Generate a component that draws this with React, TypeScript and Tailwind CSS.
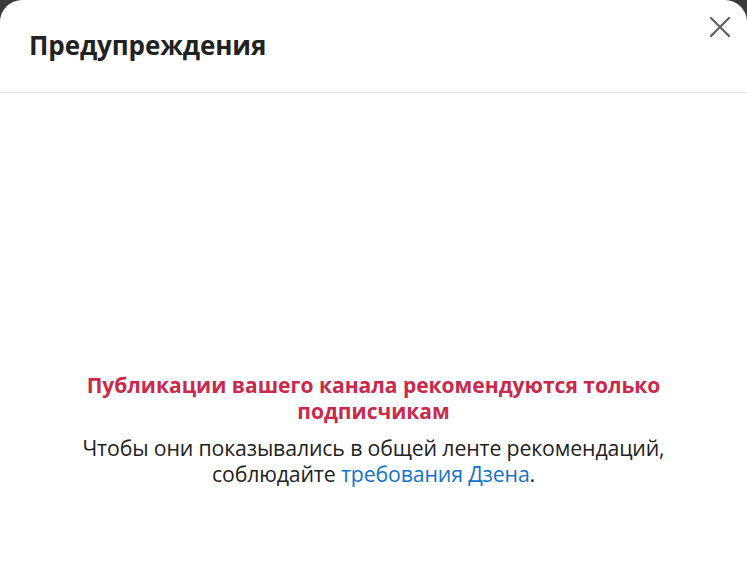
import React from 'react';

const CloseIcon: React.FC = () => (
    <svg width="22" height="22" viewBox="0 0 22 22" fill="none">
        <path d="M2 2L20 20M20 2L2 20" stroke="#5f5f5f" strokeWidth="2.2" strokeLinecap="round" />
    </svg>
);

export default function App() {
    return (
        <div className="w-[747px] h-[579px] bg-[#3a3a3a] overflow-hidden" style={{ fontFamily: '"Open Sans", "Noto Sans", sans-serif' }}>
            <div className="relative h-full bg-white rounded-t-[22px] flex flex-col">
                <div className="h-[93px] border-b border-[#e6e6e6] flex items-center px-[29px]">
                    <h1 className="text-[26px] font-bold text-[#222222] tracking-[-0.1px] pb-[2px]">Предупреждения</h1>
                </div>
                <button className="absolute top-[16px] right-[16px] p-0 text-[#5f5f5f]">
                    <CloseIcon />
                </button>

                <div className="flex flex-col items-center pt-[279px] px-4 text-center">
                    <div className="w-[640px] text-[21px] leading-[26px] font-bold text-[#c9294b]">
                        Публикации вашего канала рекомендуются только подписчикам
                    </div>
                    <div className="w-[640px] mt-[11px] text-[21.3px] leading-[26px] text-[#222222] tracking-[-0.15px]">
                        Чтобы они показывались в общей ленте рекомендаций, соблюдайте{' '}
                        <a href="#" className="text-[#1473c8]">требования Дзена</a>.
                    </div>
                </div>
            </div>
        </div>
    );
}
